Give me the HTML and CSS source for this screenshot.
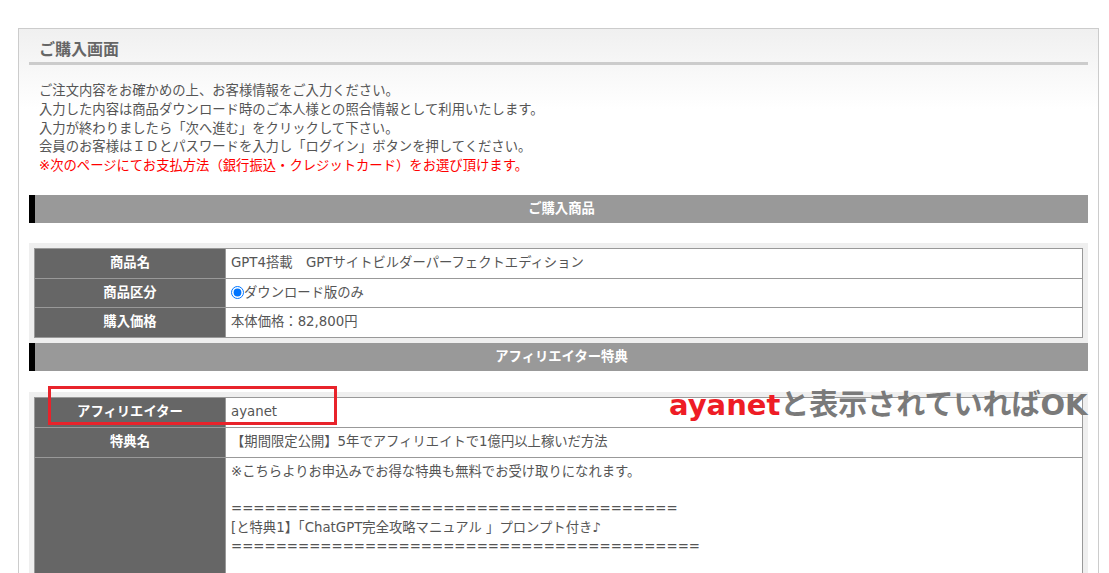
FILE: index.html
```html
<!DOCTYPE html>
<html lang="ja">
  <head>
    <meta charset="UTF-8" />
    <meta name="viewport" content="width=device-width, initial-scale=1.0" />
    <title>ご購入画面</title>
    <link rel="stylesheet" href="styles.css">
  </head>
  <body>
    <div class="page">
      <div class="purchase">
        <h2 class="purchase-title">ご購入画面</h2>
        <p class="intro">
          ご注文内容をお確かめの上、お客様情報をご入力ください。<br>
          入力した内容は商品ダウンロード時のご本人様との照合情報として利用いたします。<br>
          入力が終わりましたら「次へ進む」をクリックして下さい。<br>
          会員のお客様はＩＤとパスワードを入力し「ログイン」ボタンを押してください。<br>
          <span class="notice">※次のページにてお支払方法（銀行振込・クレジットカード）をお選び頂けます。</span>
        </p>

        <h3 class="section-bar">ご購入商品</h3>
        <div class="table-wrap">
          <table class="form-table">
            <tr>
              <th>商品名</th>
              <td>GPT4搭載　GPTサイトビルダーパーフェクトエディション</td>
            </tr>
            <tr>
              <th>商品区分</th>
              <td><label><input type="radio" class="radio" name="kubun" checked>ダウンロード版のみ</label></td>
            </tr>
            <tr>
              <th>購入価格</th>
              <td>本体価格：82,800円</td>
            </tr>
          </table>
        </div>

        <h3 class="section-bar">アフィリエイター特典</h3>
        <div class="table-wrap table-wrap-affiliate">
          <table class="form-table">
            <tr>
              <th>アフィリエイター</th>
              <td>ayanet</td>
            </tr>
            <tr>
              <th>特典名</th>
              <td>【期間限定公開】5年でアフィリエイトで1億円以上稼いだ方法</td>
            </tr>
            <tr>
              <th></th>
              <td>
                ※こちらよりお申込みでお得な特典も無料でお受け取りになれます。<br>
                <br>
                ========================================<br>
                [と特典1】「ChatGPT完全攻略マニュアル 」プロンプト付き♪<br>
                ==========================================<br>
                <br>
                <br>
                <br>
              </td>
            </tr>
          </table>
        </div>
      </div>

      <!-- annotation layered over the screenshot -->
      <div class="mark-box"></div>
      <div class="mark-note"><span class="mark-red">ayanet</span>と表示されていればOK</div>
    </div>
  </body>
</html>
```

FILE: styles.css
```css
body {
  margin: 0;
  font-family: "DejaVu Sans", "Noto Sans CJK JP", sans-serif;
  font-size: 13.33px;
  color: #555;
  background-color: #fff;
}
.page {
  position: relative;
  width: 1109px;
  height: 573px;
  overflow: hidden;
}
.purchase {
  margin: 28px 10px 0 18px;
  padding: 0 10px 10px;
  border: 1px solid #ccc;
  border-bottom: none;
  background: linear-gradient(#f0f0f0, #fff 80px);
}
.purchase-title {
  margin: 0;
  padding: 9px 10px 0;
  font-size: 16px;
  line-height: 24px;
  color: #666;
  border-bottom: 3px solid #ccc;
}
.intro {
  margin: 0 0 19px;
  padding: 17px 10px 0;
  line-height: 18.75px;
}
.notice {
  color: #f00;
}
.section-bar {
  margin: 0;
  height: 28px;
  line-height: 28px;
  border-left: 6px solid #000;
  background-color: #999;
  color: #fff;
  font-size: 13.33px;
  text-align: center;
}
.table-wrap {
  margin-top: 20px;
  padding: 5px;
  background-color: #efefef;
}
.table-wrap-affiliate {
  margin-top: 21px;
}
.form-table {
  width: 100%;
  border-collapse: collapse;
  background-color: #fff;
}
.form-table th,
.form-table td {
  border: 1px solid #999;
  padding: 5px;
  line-height: 18.75px;
  vertical-align: top;
}
.form-table th {
  width: 180px;
  background-color: #666;
  color: #fff;
  text-align: center;
}
.form-table td {
  text-align: left;
}
.radio {
  margin: 0;
  width: 13px;
  height: 13px;
  vertical-align: -2px;
}
.mark-box {
  position: absolute;
  left: 48px;
  top: 386px;
  width: 289px;
  height: 39px;
  box-sizing: border-box;
  border: 3px solid #e8232b;
}
.mark-note {
  position: absolute;
  left: 669px;
  top: 391px;
  font-size: 29px;
  line-height: 29px;
  font-weight: bold;
  color: #7a7a7a;
  white-space: nowrap;
}
.mark-red {
  color: #ee1c25;
}
```
